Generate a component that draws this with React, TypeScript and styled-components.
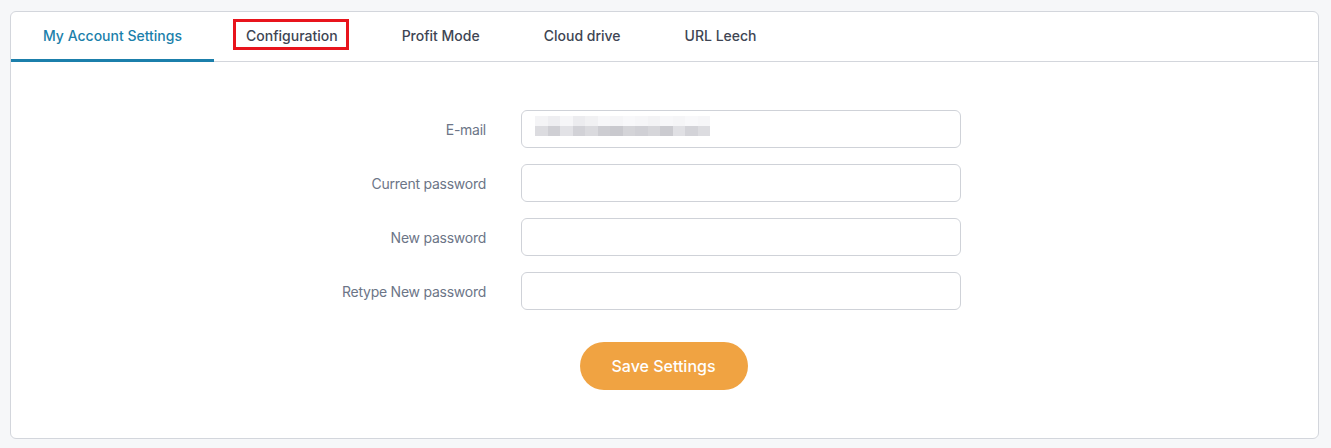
import React from 'react';
import styled, { createGlobalStyle } from 'styled-components';

const GlobalStyle = createGlobalStyle`
  body {
    margin: 0;
    background: #f6f7f9;
    font-family: Inter, "Noto Sans", sans-serif;
  }
`;

const tabs = ['My Account Settings', 'Configuration', 'Profit Mode', 'Cloud drive', 'URL Leech'];

const fields = [
  { label: 'E-mail', type: 'email', blurred: true },
  { label: 'Current password', type: 'password' },
  { label: 'New password', type: 'password' },
  { label: 'Retype New password', type: 'password' }
];

// pixelated blur over the e-mail value
const blurTop = ['#f4f4f6', '#eeeef1', '#f6f6f8', '#ececef', '#f1f1f3', '#f7f7f9', '#f5f5f7', '#f8f8fa', '#f6f6f8', '#f3f3f5', '#f7f7f9', '#f5f5f7', '#f8f8fa', '#f6f6f8'];
const blurBottom = ['#dcdce0', '#cfcfd4', '#e2e2e6', '#d2d2d7', '#dadade', '#cdcdd2', '#c9c9ce', '#d4d4d8', '#d0d0d5', '#d6d6da', '#cbcbd0', '#e0e0e4', '#d3d3d8', '#dcdce0'];

export default function App() {
  return (
    <>
      <GlobalStyle />
      <Page>
        <Card>
          <TabBar>
            {tabs.map((t, i) => (
              <Tab key={t} $active={i === 0} $marked={i === 1}>
                {t}
              </Tab>
            ))}
          </TabBar>
          <Form>
            {fields.map((f) => (
              <React.Fragment key={f.label}>
                <Label>{f.label}</Label>
                <InputBox>
                  <Input type={f.type} />
                  {f.blurred && (
                    <Blur>
                      <BlurRow>
                        {blurTop.map((c, i) => (
                          <BlurCell key={i} $color={c} />
                        ))}
                      </BlurRow>
                      <BlurRow>
                        {blurBottom.map((c, i) => (
                          <BlurCell key={i} $color={c} />
                        ))}
                      </BlurRow>
                    </Blur>
                  )}
                </InputBox>
                <span />
              </React.Fragment>
            ))}
            <ButtonRow>
              <SaveButton type="button">Save Settings</SaveButton>
            </ButtonRow>
          </Form>
        </Card>
      </Page>
    </>
  );
}

const Page = styled.div`
  padding: 11px 12px 10px 10px;
`;

const Card = styled.div`
  background: #fff;
  border: 1px solid #d3d6dc;
  border-radius: 6px;
  overflow: hidden;
`;

const TabBar = styled.div`
  display: flex;
  border-bottom: 1px solid #d3d6dc;
`;

const Tab = styled.div<{ $active?: boolean; $marked?: boolean }>`
  position: relative;
  padding: 14px 32px 13px 32px;
  font-size: 14px;
  font-weight: 500;
  line-height: 20px;
  color: ${(p) => (p.$active ? '#1b7fab' : '#3e4553')};
  border-bottom: 3px solid ${(p) => (p.$active ? '#1b7fab' : 'transparent')};
  margin-bottom: -1px;

  ${(p) =>
    p.$marked &&
    `
    &::after {
      content: '';
      position: absolute;
      left: 19px;
      right: 21px;
      top: 7px;
      bottom: 9px;
      border: 3px solid #e8141c;
    }
  `}
`;

const Form = styled.div`
  display: grid;
  grid-template-columns: 475px 440px 1fr;
  column-gap: 35px;
  row-gap: 16px;
  align-items: center;
  padding: 48px 0 48px 0;
`;

const Label = styled.label`
  text-align: right;
  font-size: 14px;
  letter-spacing: -0.25px;
  color: #6c7587;
`;

const InputBox = styled.div`
  position: relative;
  height: 38px;
`;

const Input = styled.input`
  box-sizing: border-box;
  width: 100%;
  height: 38px;
  border: 1px solid #cfd2d8;
  border-radius: 6px;
  background: #fff;
  padding: 0 14px;
  font-size: 14px;
  outline: none;
`;

const Blur = styled.div`
  position: absolute;
  left: 14px;
  top: 6px;
  display: flex;
  flex-direction: column;
`;

const BlurRow = styled.div`
  display: flex;
`;

const BlurCell = styled.div<{ $color: string }>`
  width: 12.5px;
  height: 10px;
  background: ${(p) => p.$color};
`;

const ButtonRow = styled.div`
  grid-column: 1 / -1;
  display: flex;
  justify-content: center;
  padding-top: 16px;
  padding-right: 2px;
`;

const SaveButton = styled.button`
  width: 168px;
  height: 48px;
  border: none;
  border-radius: 24px;
  background: #f0a342;
  color: #fff;
  font-family: Inter, "Noto Sans", sans-serif;
  font-size: 16px;
  font-weight: 500;
  cursor: pointer;
`;
